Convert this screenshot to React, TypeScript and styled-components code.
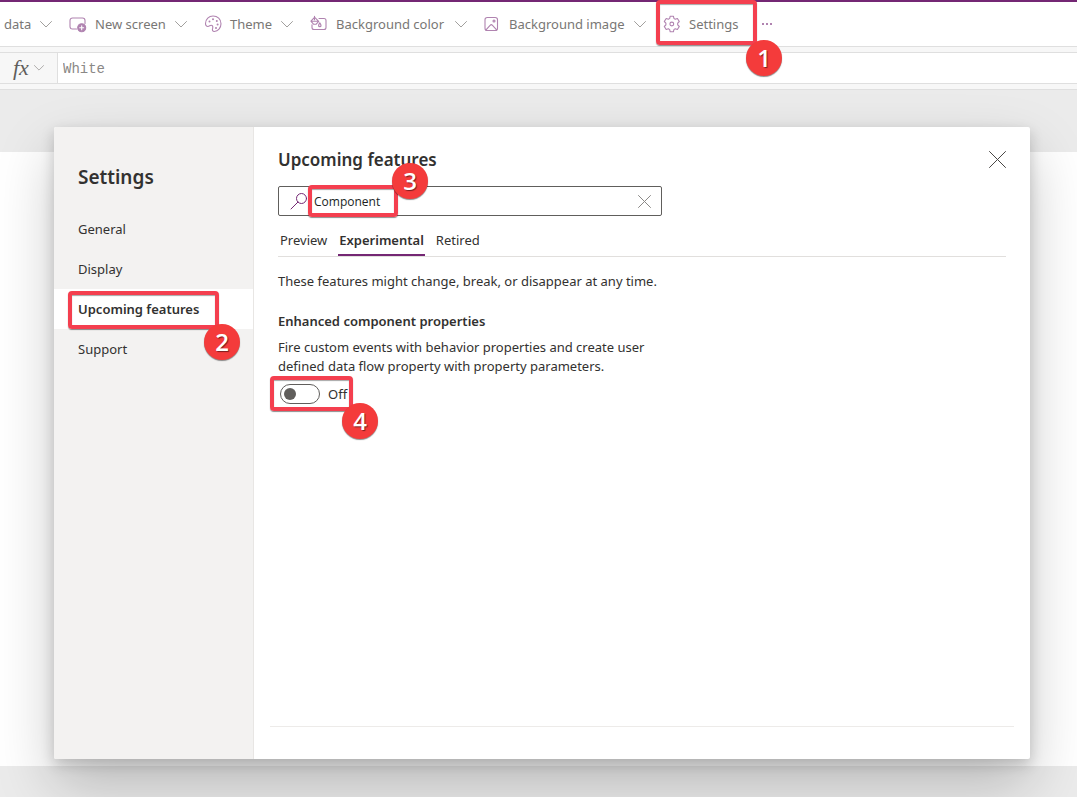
import React, { useState } from "react";
import styled, { createGlobalStyle } from "styled-components";

const purple = "#742774";
const iconPurple = "#b083b0";

const GlobalStyle = createGlobalStyle`
  *, *::before, *::after { box-sizing: border-box; }
  body {
    margin: 0;
    background: #ebebeb;
    color: #323130;
    font-family: "Noto Sans", "Open Sans", sans-serif;
    font-size: 13px;
    line-height: 19px;
  }
  button, input { font: inherit; color: inherit; }
  button { padding: 0; border: 0; background: none; cursor: pointer; }
  h1, h2, h3, p, ul { margin: 0; padding: 0; }
`;

const Shell = styled.div`
  display: flex;
  flex-direction: column;
  min-height: 100vh;
  overflow: hidden;
`;

const Toolbar = styled.nav`
  display: flex;
  height: 46px;
  border-top: 2px solid ${purple};
  background: #fff;
`;

const ToolItem = styled.button<{ $width: number }>`
  position: relative;
  display: flex;
  align-items: center;
  gap: 8px;
  flex: 0 0 ${(p) => p.$width}px;
  padding-right: 17px;
  color: #797775;
  text-align: left;
  white-space: nowrap;
`;

const FirstToolItem = styled(ToolItem)`
  padding-left: 4px;
`;

const ToolLabel = styled.span`
  flex: 1;
`;

const MoreButton = styled.button`
  display: flex;
  align-items: center;
`;

const Icon = styled.svg`
  display: block;
  flex: none;
  fill: none;
  stroke: ${iconPurple};
  stroke-width: 1.1;
  stroke-linecap: round;
  stroke-linejoin: round;
`;

const LineIcon = styled(Icon)<{ $color: string }>`
  stroke: ${(p) => p.$color};
  stroke-width: 1;
`;

const FormulaBar = styled.div`
  padding: 5px 0;
  border: solid #dfdfdf;
  border-width: 1px 0;
  background: #f7f7f7;
`;

const FormulaRow = styled.div`
  display: flex;
  height: 32px;
  border: solid #dfdfdf;
  border-width: 1px 0;
`;

const FxButton = styled.button`
  display: flex;
  align-items: center;
  justify-content: space-between;
  width: 58px;
  padding: 0 13px;
  border-right: 1px solid #dfdfdf;
  color: #605e5c;
`;

const FxLetters = styled.span`
  font: italic 22px/24px "Liberation Serif", serif;
`;

const FormulaInput = styled.input`
  flex: 1;
  min-width: 0;
  padding: 1px 5px 0;
  border: 0;
  outline: 0;
  background: #fff;
  color: #8a8886;
  font: 14px/20px "Liberation Mono", monospace;
`;

const Workspace = styled.main`
  display: grid;
  flex: 1;
`;

const Canvas = styled.div`
  grid-area: 1 / 1;
  margin: 62px 0 31px;
  background: #fff;
`;

const Dialog = styled.section`
  grid-area: 1 / 1;
  display: flex;
  min-height: 632px;
  margin: 37px 47px 38px 54px;
  border-radius: 2px;
  background: #fff;
  box-shadow: 0 26px 58px rgba(0, 0, 0, 0.22), 0 5px 14px rgba(0, 0, 0, 0.18);
`;

const Sidebar = styled.aside`
  flex: 0 0 200px;
  padding-top: 38px;
  border-right: 1px solid #e8e6e4;
  border-radius: 2px 0 0 2px;
  background: #f3f2f1;
`;

const SidebarTitle = styled.h1`
  padding: 0 24px;
  margin-bottom: 20px;
  font-size: 19px;
  font-weight: 600;
  line-height: 24px;
`;

const NavList = styled.ul`
  list-style: none;
`;

const NavButton = styled.button<{ $active: boolean }>`
  position: relative;
  display: block;
  width: 100%;
  height: 40px;
  padding: 0 24px;
  background: ${(p) => (p.$active ? "#fff" : "transparent")};
  font-weight: ${(p) => (p.$active ? 600 : 400)};
  text-align: left;
  white-space: nowrap;
`;

const Panel = styled.div`
  display: flex;
  flex: 1;
  flex-direction: column;
  min-width: 0;
  padding: 20px 16px 32px;
`;

const PanelBody = styled.div`
  flex: 1;
  padding: 0 8px;
  border-bottom: 1px solid #edebe9;
`;

const PanelHeader = styled.header`
  display: flex;
  align-items: center;
  justify-content: space-between;
  height: 24px;
  margin-bottom: 15px;
`;

const PanelTitle = styled.h2`
  padding-top: 2px;
  font-size: 17px;
  font-weight: 600;
  line-height: 24px;
`;

const IconButton = styled.button`
  display: flex;
`;

const SearchBox = styled.div`
  display: flex;
  align-items: center;
  max-width: 384px;
  height: 30px;
  padding: 0 10px 0 11px;
  border: 1px solid #605e5c;
  border-radius: 2px;
`;

const SearchField = styled.div`
  position: relative;
  display: flex;
  flex: 1;
`;

const SearchInput = styled.input`
  flex: 1;
  min-width: 0;
  padding: 2px 6px 0;
  border: 0;
  outline: 0;
  background: transparent;
  color: #201f1e;
  font-family: "Open Sans", sans-serif;
  font-size: 12px;
  line-height: 20px;
`;

const TabList = styled.div`
  display: flex;
  gap: 10px;
  height: 41px;
  padding: 11px 0 0 1px;
  border-bottom: 1px solid #e1dfdd;
`;

const Tab = styled.button<{ $active: boolean }>`
  padding: 0 1px;
  border-bottom: 2px solid ${(p) => (p.$active ? purple : "transparent")};
  font-weight: ${(p) => (p.$active ? 600 : 400)};
`;

const Intro = styled.p`
  margin-top: 15px;
`;

const FeatureTitle = styled.h3`
  margin: 21px 0 7px;
  font-size: 13px;
  font-weight: 600;
`;

const FeatureText = styled.p`
  max-width: 392px;
`;

const ToggleRow = styled.label`
  position: relative;
  display: inline-flex;
  align-items: center;
  gap: 8px;
  margin-top: 8px;
  padding-left: 2px;
  cursor: pointer;
`;

const Toggle = styled.input`
  appearance: none;
  width: 40px;
  height: 20px;
  margin: 0;
  padding: 3px;
  border: 1px solid #605e5c;
  border-radius: 10px;
  background: #fff;
  &::before {
    content: "";
    display: block;
    width: 12px;
    height: 12px;
    border-radius: 50%;
    background: #605e5c;
  }
  &:checked::before { margin-left: 20px; }
`;

const Marker = styled.span<{ $left: number; $top: number; $width: number; $height: number }>`
  position: absolute;
  z-index: 1;
  left: ${(p) => p.$left}px;
  top: ${(p) => p.$top}px;
  width: ${(p) => p.$width}px;
  height: ${(p) => p.$height}px;
  border: 4px solid #f43f4f;
  border-radius: 4px;
  box-shadow: 0 1px 1px rgba(0, 0, 0, 0.45), inset 0 1px 1px rgba(0, 0, 0, 0.35);
  pointer-events: none;
`;

const MarkerBadge = styled.span<{ $x: number; $y: number }>`
  position: absolute;
  left: ${(p) => p.$x}px;
  top: ${(p) => p.$y}px;
  width: 36px;
  height: 36px;
  border-radius: 50%;
  background: #f43b3b;
  box-shadow: 0 1px 1px rgba(0, 0, 0, 0.45);
  color: #fff;
  font: 600 24px/35px "Open Sans", sans-serif;
  text-align: center;
  text-shadow: 1px 1px 1px rgba(0, 0, 0, 0.5);
`;

type CalloutProps = {
  step: number;
  frame: [number, number, number, number];
  badge: [number, number];
};

function Callout({ step, frame, badge }: CalloutProps) {
  return (
    <Marker aria-hidden $left={frame[0]} $top={frame[1]} $width={frame[2]} $height={frame[3]}>
      <MarkerBadge $x={badge[0]} $y={badge[1]}>{step}</MarkerBadge>
    </Marker>
  );
}

const Chevron = ({ small = false }: { small?: boolean }) => (
  <LineIcon $color="#a19f9d" width={small ? 10 : 12} height={small ? 6 : 7} viewBox="0 0 12 7">
    <path d="M.5 .5 6 6 11.5 .5" />
  </LineIcon>
);

const Cross = ({ size, color }: { size: number; color: string }) => (
  <LineIcon $color={color} width={size} height={size} viewBox={`0 0 ${size} ${size}`}>
    <path d={`M.5 .5 ${size - 0.5} ${size - 0.5}M${size - 0.5} .5 .5 ${size - 0.5}`} />
  </LineIcon>
);

const NewScreenIcon = () => (
  <Icon width="18" height="18" viewBox="0 0 18 18">
    <path d="M7.5 14H3.5a2.5 2.5 0 0 1-2.5-2.5v-6A2.5 2.5 0 0 1 3.500 3h10A2.500 2.500 0 0 1 16 5.500v3" />
    <circle cx="12.700" cy="12.700" r="4" fill={iconPurple} />
    <path d="M12.700 10.700v4M10.700 12.700h4" stroke="#fff" />
  </Icon>
);

const ThemeIcon = () => (
  <Icon width="18" height="18" viewBox="0 0 18 18">
    <path d="M1.500 8.500C1.500 4 5 1 9 1c4.600 0 8 3.300 8 7.800 0 4.200-3 7.700-6.600 7.700-2 0-2.300-1.500-1.800-3 .5-1.700.2-3.300-1.500-3.300-1.200 0-1.800 1.300-3.200 1.300-1.500 0-2.400-1.200-2.400-3Z" />
    <g fill={iconPurple} stroke="none">
      <circle cx="5.500" cy="6.500" r="1" />
      <circle cx="9" cy="4.200" r="1" />
      <circle cx="12.800" cy="6" r="1" />
      <circle cx="13.600" cy="9.600" r="1" />
      <circle cx="12" cy="13" r="1" />
    </g>
  </Icon>
);

const FillIcon = () => (
  <Icon width="18" height="18" viewBox="0 0 18 18">
    <path d="M9 3.500h5a2 2 0 0 1 2 2V12.500a2 2 0 0 1-2 2H4a2 2 0 0 1-2-2V9.800" />
    <path d="M4.300 2.700 .9 6.200l2.600 3h2.700l2.500-2.800L5 2.700M4.500 4.700V1.200M1.200 6.200h7.300" />
    <path d="M9.800 7.800c-1.800 2.400-1.500 3.800 0 3.800s1.800-1.400 0-3.800Z" />
  </Icon>
);

const ImageIcon = () => (
  <Icon width="17" height="18" viewBox="0 0 17 18">
    <rect x="1" y="2.500" width="12.500" height="13" rx="2.300" />
    <path d="M2 14.800 6.100 10.300a1.700 1.700 0 0 1 2.400 0l4.100 4.500" />
    <circle cx="10" cy="6" r="1" />
  </Icon>
);

const GearIcon = () => (
  <Icon width="18" height="18" viewBox="0 0 18 18">
    <path d="m7.200 1.200-.5 2.200-1.300.8-2.200-.7-1.900 3 1.600 1.600v1.800l-1.600 1.600 1.900 3 2.200-.7 1.300.8.5 2.200h3.200l.5-2.200 1.300-.8 2.200.7 1.900-3-1.600-1.600V8.100l1.600-1.600-1.900-3-2.200.7-1.300-.8-.5-2.200Z" />
    <circle cx="8.800" cy="9" r="1.900" />
  </Icon>
);

const tools = [
  { label: "New screen", width: 135, icon: <NewScreenIcon /> },
  { label: "Theme", width: 106, icon: <ThemeIcon /> },
  { label: "Background color", width: 174, icon: <FillIcon /> },
  { label: "Background image", width: 179, icon: <ImageIcon /> },
];

const sections = ["General", "Display", "Upcoming features", "Support"];
const tabs = ["Preview", "Experimental", "Retired"];

export default function App() {
  const [section, setSection] = useState("Upcoming features");
  const [tab, setTab] = useState("Experimental");
  const [query, setQuery] = useState("Component");
  const [formula, setFormula] = useState("White");
  const [enabled, setEnabled] = useState(false);

  return (
    <Shell>
      <GlobalStyle />
      <Toolbar aria-label="Commands">
        <FirstToolItem $width={69}>
          <ToolLabel>data</ToolLabel>
          <Chevron />
        </FirstToolItem>
        {tools.map((t) => (
          <ToolItem key={t.label} $width={t.width}>
            {t.icon}
            <ToolLabel>{t.label}</ToolLabel>
            <Chevron />
          </ToolItem>
        ))}
        <ToolItem $width={98}>
          <GearIcon />
          <ToolLabel>Settings</ToolLabel>
          <Callout step={1} frame={[-7, -2, 101, 45]} badge={[86, 36]} />
        </ToolItem>
        <MoreButton aria-label="More commands">
          <Icon width="12" height="4" viewBox="0 0 12 4">
            <path d="M1 2h2M5 2h2M9 2h2" strokeWidth="2" strokeLinecap="butt" />
          </Icon>
        </MoreButton>
      </Toolbar>

      <FormulaBar>
        <FormulaRow>
          <FxButton aria-label="Functions">
            <FxLetters>fx</FxLetters>
            <Chevron small />
          </FxButton>
          <FormulaInput aria-label="Formula" value={formula} onChange={(e) => setFormula(e.target.value)} />
        </FormulaRow>
      </FormulaBar>

      <Workspace>
        <Canvas />
        <Dialog role="dialog" aria-label="Settings">
          <Sidebar>
            <SidebarTitle>Settings</SidebarTitle>
            <NavList>
              {sections.map((s) => (
                <li key={s}>
                  <NavButton $active={s === section} onClick={() => setSection(s)}>
                    {s}
                    {s === "Upcoming features" && (
                      <Callout step={2} frame={[14, 2, 151, 38]} badge={[132, 29]} />
                    )}
                  </NavButton>
                </li>
              ))}
            </NavList>
          </Sidebar>

          <Panel>
            <PanelBody>
              <PanelHeader>
                <PanelTitle>Upcoming features</PanelTitle>
                <IconButton aria-label="Close">
                  <Cross size={17} color="#484644" />
                </IconButton>
              </PanelHeader>

              <SearchBox>
                <LineIcon $color={purple} width="18" height="18" viewBox="0 0 18 18">
                  <circle cx="11.500" cy="6.500" r="5" />
                  <path d="M7.900 10.100 1 17" />
                </LineIcon>
                <SearchField>
                  <SearchInput
                    aria-label="Search features"
                    value={query}
                    onChange={(e) => setQuery(e.target.value)}
                  />
                  <Callout step={3} frame={[0, -5, 90, 32]} badge={[80, -26]} />
                </SearchField>
                <IconButton aria-label="Clear search" onClick={() => setQuery("")}>
                  <Cross size={13} color="#8a8886" />
                </IconButton>
              </SearchBox>

              <TabList role="tablist">
                {tabs.map((t) => (
                  <Tab key={t} role="tab" aria-selected={t === tab} $active={t === tab} onClick={() => setTab(t)}>
                    {t}
                  </Tab>
                ))}
              </TabList>

              <Intro>These features might change, break, or disappear at any time.</Intro>
              <FeatureTitle>Enhanced component properties</FeatureTitle>
              <FeatureText>
                Fire custom events with behavior properties and create user defined data flow property with
                property parameters.
              </FeatureText>
              <ToggleRow>
                <Toggle
                  type="checkbox"
                  role="switch"
                  checked={enabled}
                  onChange={(e) => setEnabled(e.target.checked)}
                />
                {enabled ? "On" : "Off"}
                <Callout step={4} frame={[-8, -8, 83, 35]} badge={[68, 23]} />
              </ToggleRow>
            </PanelBody>
          </Panel>
        </Dialog>
      </Workspace>
    </Shell>
  );
}
